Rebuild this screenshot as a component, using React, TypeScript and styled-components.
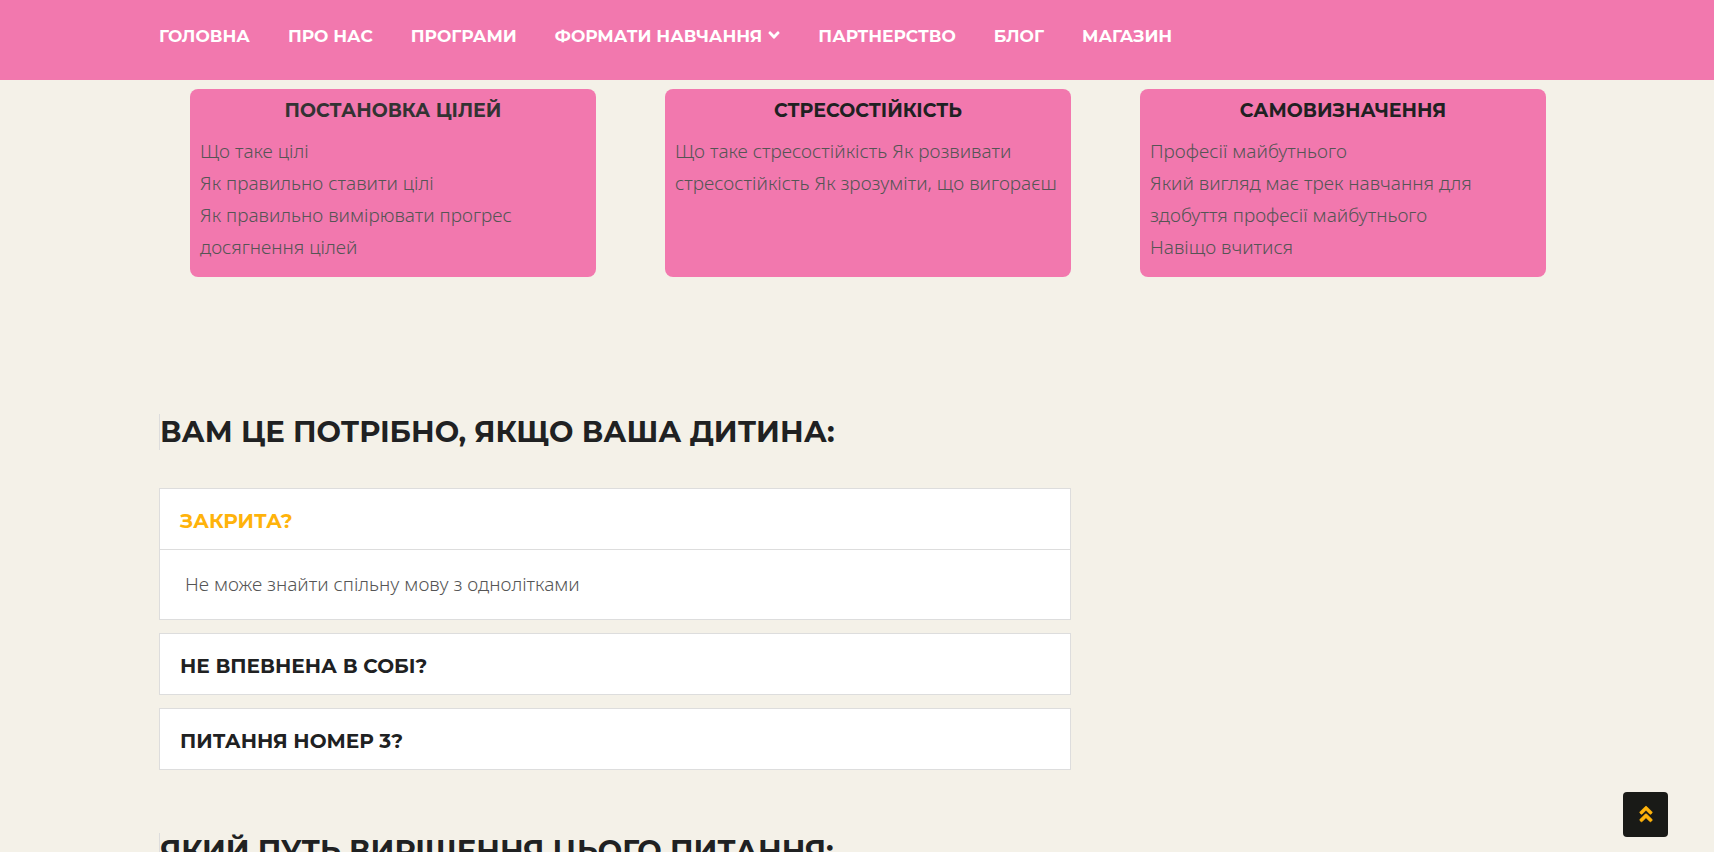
import React, { useRef, useState } from "react";
import styled, { createGlobalStyle } from "styled-components";
import { FaAngleDoubleUp, FaAngleDown } from "react-icons/fa";

const pink = "#f278ae";
const ink = "#202122";
const amber = "#ffb30b";
const line = "#dddddd";
const headingFont = `Montserrat, Inter, "Liberation Sans", sans-serif`;

const GlobalStyle = createGlobalStyle`
  *, *::before, *::after { box-sizing: border-box; }
  body {
    margin: 0;
    background: #f4f1e8;
    color: #555555;
    font-family: "Noto Sans", "Open Sans", sans-serif;
    font-size: 19px;
    font-weight: 300;
    line-height: 32px;
  }
`;

const Page = styled.div`
  height: 100vh;
  overflow-y: auto;
  scrollbar-width: none;
`;

const Container = styled.div`
  max-width: 1426px;
  margin: 0 auto;
  padding: 0 15px;
`;

const Header = styled.header`
  position: sticky;
  top: 0;
  z-index: 2;
  min-height: 80px;
  padding: 20px 0 28px;
  background: ${pink};
`;

const Nav = styled.nav`
  display: flex;
  flex-wrap: wrap;
  column-gap: 38px;
`;

const NavLink = styled.a`
  display: inline-flex;
  align-items: center;
  gap: 6px;
  color: #ffffff;
  font: 700 17px/32px ${headingFont};
  text-decoration: none;
  white-space: nowrap;

  svg {
    width: 12px;
    height: 18px;
    margin-bottom: 2px;
  }
`;

const Topics = styled.section`
  display: grid;
  grid-template-columns: repeat(3, minmax(0, 1fr));
  gap: 69px;
  padding: 9px 9px 0 31px;
`;

const Card = styled.article`
  min-height: 188px;
  padding: 9px 0 14px 10px;
  border-radius: 8px;
  background: ${pink};

  p {
    margin: 0;
  }
`;

const CardTitle = styled.h3<{ $soft?: boolean }>`
  margin: 0 10px 11px 0;
  color: ${(p) => (p.$soft ? "#333333" : ink)};
  font: 700 19px/26px ${headingFont};
  text-align: center;
`;

const Column = styled.div`
  width: 65.33%;
`;

const SectionTitle = styled.h2`
  margin: 0;
  border-left: 1px solid ${line};
  color: ${ink};
  font: 700 29px/36px ${headingFont};
`;

const Questions = styled.section`
  padding-top: 137px;
`;

const Accordion = styled.div`
  display: flex;
  flex-direction: column;
  gap: 13px;
  margin: 38px 0 63px;
`;

const Item = styled.div`
  border: 1px solid ${line};
  background: #ffffff;
`;

const Question = styled.button<{ $open: boolean }>`
  display: block;
  width: 100%;
  padding: 19px 20px 15px;
  border: 0;
  background: none;
  color: ${(p) => (p.$open ? amber : ink)};
  font: 700 20px/26px ${headingFont};
  text-align: left;
  cursor: pointer;
`;

const Answer = styled.div`
  padding: 18px 25px 19px;
  border-top: 1px solid ${line};
`;

const ToTop = styled.button`
  position: fixed;
  right: 46px;
  bottom: 15px;
  z-index: 3;
  display: grid;
  place-items: center;
  width: 45px;
  height: 45px;
  padding: 0 0 2px;
  border: 0;
  border-radius: 4px;
  background: #191a17;
  color: ${amber};
  cursor: pointer;

  svg {
    width: 20px;
    height: 20px;
    stroke: currentColor;
    stroke-width: 16px;
  }
`;

const links = [
  { label: "ГОЛОВНА" },
  { label: "ПРО НАС" },
  { label: "ПРОГРАМИ" },
  { label: "ФОРМАТИ НАВЧАННЯ", menu: true },
  { label: "ПАРТНЕРСТВО" },
  { label: "БЛОГ" },
  { label: "МАГАЗИН" },
];

const topics = [
  {
    title: "ПОСТАНОВКА ЦІЛЕЙ",
    soft: true,
    lines: ["Що таке цілі", "Як правильно ставити цілі", "Як правильно вимірювати прогрес досягнення цілей"],
  },
  {
    title: "СТРЕСОСТІЙКІСТЬ",
    lines: ["Що таке стресостійкість Як розвивати стресостійкість Як зрозуміти, що вигораєш"],
  },
  {
    title: "САМОВИЗНАЧЕННЯ",
    lines: [
      "Професії майбутнього",
      "Який вигляд має трек навчання для здобуття професії майбутнього",
      "Навіщо вчитися",
    ],
  },
];

const questions = [
  { title: "ЗАКРИТА?", answer: "Не може знайти спільну мову з однолітками" },
  { title: "НЕ ВПЕВНЕНА В СОБІ?" },
  { title: "ПИТАННЯ НОМЕР 3?" },
];

export default function App() {
  const page = useRef<HTMLDivElement>(null);
  const [open, setOpen] = useState(0);

  return (
    <Page ref={page}>
      <GlobalStyle />
      <Header>
        <Container>
          <Nav>
            {links.map((link) => (
              <NavLink href="#" key={link.label}>
                {link.label}
                {link.menu && <FaAngleDown aria-hidden />}
              </NavLink>
            ))}
          </Nav>
        </Container>
      </Header>
      <Container as="main">
        <Topics>
          {topics.map((topic) => (
            <Card key={topic.title}>
              <CardTitle $soft={topic.soft}>{topic.title}</CardTitle>
              {topic.lines.map((text) => (
                <p key={text}>{text}</p>
              ))}
            </Card>
          ))}
        </Topics>
        <Questions>
          <Column>
            <SectionTitle>ВАМ ЦЕ ПОТРІБНО, ЯКЩО ВАША ДИТИНА:</SectionTitle>
            <Accordion>
              {questions.map((q, i) => (
                <Item key={q.title}>
                  <Question
                    type="button"
                    $open={open === i}
                    aria-expanded={open === i}
                    onClick={() => setOpen(open === i ? -1 : i)}
                  >
                    {q.title}
                  </Question>
                  {open === i && q.answer && <Answer>{q.answer}</Answer>}
                </Item>
              ))}
            </Accordion>
            <SectionTitle>ЯКИЙ ПУТЬ ВИРІШЕННЯ ЦЬОГО ПИТАННЯ:</SectionTitle>
          </Column>
        </Questions>
      </Container>
      <ToTop type="button" aria-label="Вгору" onClick={() => page.current?.scrollTo({ top: 0 })}>
        <FaAngleDoubleUp aria-hidden />
      </ToTop>
    </Page>
  );
}
